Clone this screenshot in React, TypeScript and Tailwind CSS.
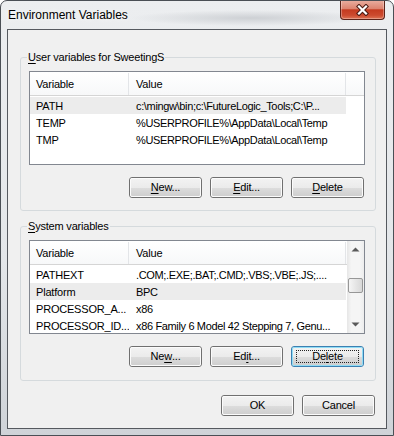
import React from "react";

type Row = { name: string; value: string; selected?: boolean };

const userRows: Row[] = [
  { name: "PATH", value: "c:\\mingw\\bin;c:\\FutureLogic_Tools;C:\\P...", selected: true },
  { name: "TEMP", value: "%USERPROFILE%\\AppData\\Local\\Temp" },
  { name: "TMP", value: "%USERPROFILE%\\AppData\\Local\\Temp" },
];

const systemRows: Row[] = [
  { name: "PATHEXT", value: ".COM;.EXE;.BAT;.CMD;.VBS;.VBE;.JS;...." },
  { name: "Platform", value: "BPC", selected: true },
  { name: "PROCESSOR_A...", value: "x86" },
  { name: "PROCESSOR_ID...", value: "x86 Family 6 Model 42 Stepping 7, Genu..." },
];

const Key = ({ children }: { children: React.ReactNode }) => (
  <span className="underline underline-offset-[2px]">{children}</span>
);

function WinButton({ children, focused }: { children: React.ReactNode; focused?: boolean }) {
  return (
    <button
      type="button"
      className={
        "h-[21px] w-[73px] rounded-[3px] border p-0 " +
        (focused ? "border-[#3c7fb1]" : "border-[#707070]")
      }
    >
      <span
        className={
          "flex h-full w-full items-center justify-center rounded-[2px] border bg-[linear-gradient(to_bottom,#f2f2f2_0%,#ebebeb_50%,#dddddd_50%,#cfcfcf_100%)] " +
          (focused ? "border-[#8fdcf5]" : "border-[#fbfbfb]")
        }
      >
        {focused ? (
          <span className="flex h-[13px] w-[63px] items-center justify-center border border-dotted border-[#222]">
            {children}
          </span>
        ) : (
          children
        )}
      </span>
    </button>
  );
}

function Arrow({ up }: { up?: boolean }) {
  return (
    <svg width="9" height="5" viewBox="0 0 9 5">
      <polygon points={up ? "0.5,4.5 4.5,0.5 8.5,4.5" : "0.5,0.5 4.5,4.5 8.5,0.5"} fill="#5a5a5a" />
    </svg>
  );
}

function ScrollBar() {
  return (
    <div className="flex w-[17px] shrink-0 flex-col bg-[linear-gradient(to_right,#e6e6e6,#f5f5f5_25%,#f5f5f5_75%,#ededed)]">
      <div className="flex h-[17px] items-center justify-center">
        <Arrow up />
      </div>
      <div className="flex-1">
        <div className="mx-[1px] mt-[20px] h-[15px] rounded-[2px] border border-[#979797] bg-[linear-gradient(to_right,#f5f5f5,#e6e6e6_50%,#d8d8d8)]" />
      </div>
      <div className="flex h-[17px] items-center justify-center">
        <Arrow />
      </div>
    </div>
  );
}

function VarList({ rows, scroll }: { rows: Row[]; scroll?: boolean }) {
  return (
    <div className="ml-[8px] mr-[10px] flex h-[94px] overflow-hidden border border-[#828790] bg-white">
      <div className="flex min-w-0 flex-1 flex-col">
        <div className="flex h-[24px] shrink-0 border-b border-[#d5d5d5] bg-[linear-gradient(to_bottom,#ffffff,#f7f8f9)] pt-[1px]">
          <div className="flex w-[99px] shrink-0 items-center border-r border-[#e3e5e8] pl-[6px]">Variable</div>
          <div className="flex w-[217px] shrink-0 items-center border-r border-[#e3e5e8] pl-[7px]">Value</div>
        </div>
        <div className="mt-[1px] flex flex-col">
          {rows.map((r) => (
            <div
              key={r.name}
              className={
                "flex h-[17px] w-[316px] shrink-0 items-center pt-[2px] " + (r.selected ? "bg-[#ececec]" : "")
              }
            >
              <div className="w-[99px] shrink-0 overflow-hidden whitespace-nowrap pl-[6px]">{r.name}</div>
              <div className="w-[217px] shrink-0 overflow-hidden whitespace-nowrap pl-[7px] tracking-[-0.35px]">
                {r.value}
              </div>
            </div>
          ))}
        </div>
      </div>
      {scroll && <ScrollBar />}
    </div>
  );
}

function Group({
  legend,
  children,
  className,
}: {
  legend: React.ReactNode;
  children: React.ReactNode;
  className?: string;
}) {
  return (
    <fieldset className={"ml-[12px] mr-[10px] rounded-[3px] border border-[#d5dadd] " + (className ?? "")}>
      <legend className="ml-[6px] px-[1px] text-[11px] leading-[13px]">{legend}</legend>
      {children}
    </fieldset>
  );
}

export default function App() {
  return (
    <div className="flex h-[436px] w-[394px] flex-col overflow-hidden rounded-t-[7px] border border-[#4a4f55] bg-[linear-gradient(to_bottom,#eceef0,#e3e6e9_60%,#cfd3d8)] font-['Liberation_Sans',Arial,sans-serif] text-[11px] tracking-[-0.2px] text-black">
      {/* title bar */}
      <div className="flex h-[28px] shrink-0 items-start bg-[radial-gradient(ellipse_120px_8px_at_250px_17px,#cdd0d4,transparent)]">
        <span className="pl-[7px] pt-[7px] text-[12px] leading-[14px] tracking-normal [text-shadow:0_0_6px_#fff]">
          Environment Variables
        </span>
        <div className="-mt-[1px] ml-auto mr-[8px] flex h-[20px] w-[45px] items-center justify-center rounded-b-[4px] border border-t-0 border-[#5b2319] bg-[linear-gradient(to_bottom,#eab0a2_0%,#dd8470_45%,#c53b20_52%,#cc4a2e_80%,#de7455_100%)] shadow-[inset_0_0_0_1px_rgba(255,255,255,0.3)]">
          <svg width="13" height="12" viewBox="0 0 13 12">
            <path d="M3 2.5 L10 9.5 M10 2.5 L3 9.5" stroke="#4a1a12" strokeWidth="4.2" strokeLinecap="square" />
            <path d="M3 2.5 L10 9.5 M10 2.5 L3 9.5" stroke="#ffffff" strokeWidth="2.2" strokeLinecap="square" />
          </svg>
        </div>
      </div>

      {/* client area */}
      <div className="mx-[6px] flex h-[400px] shrink-0 flex-col border border-[#55595f] bg-[#f0f0f0]">
        <Group
          className="mt-[21px] pb-[12px]"
          legend={
            <>
              <Key>U</Key>ser variables for SweetingS
            </>
          }
        >
          <div className="mt-[7px]">
            <VarList rows={userRows} />
          </div>
          <div className="mr-[11px] mt-[12px] flex justify-end gap-[8px]">
            <WinButton>
              <Key>N</Key>ew...
            </WinButton>
            <WinButton>
              <Key>E</Key>dit...
            </WinButton>
            <WinButton>
              <Key>D</Key>elete
            </WinButton>
          </div>
        </Group>

        <Group
          className="mt-[9px] pb-[13px]"
          legend={
            <>
              <Key>S</Key>ystem variables
            </>
          }
        >
          <div className="mt-[7px]">
            <VarList rows={systemRows} scroll />
          </div>
          <div className="mr-[11px] mt-[12px] flex justify-end gap-[8px]">
            <WinButton>
              Ne<Key>w</Key>...
            </WinButton>
            <WinButton>
              Ed<Key>i</Key>t...
            </WinButton>
            <WinButton focused>
              De<Key>l</Key>ete
            </WinButton>
          </div>
        </Group>

        <div className="mr-[11px] mt-[14px] flex justify-end gap-[8px]">
          <WinButton>OK</WinButton>
          <WinButton>Cancel</WinButton>
        </div>
      </div>
    </div>
  );
}
